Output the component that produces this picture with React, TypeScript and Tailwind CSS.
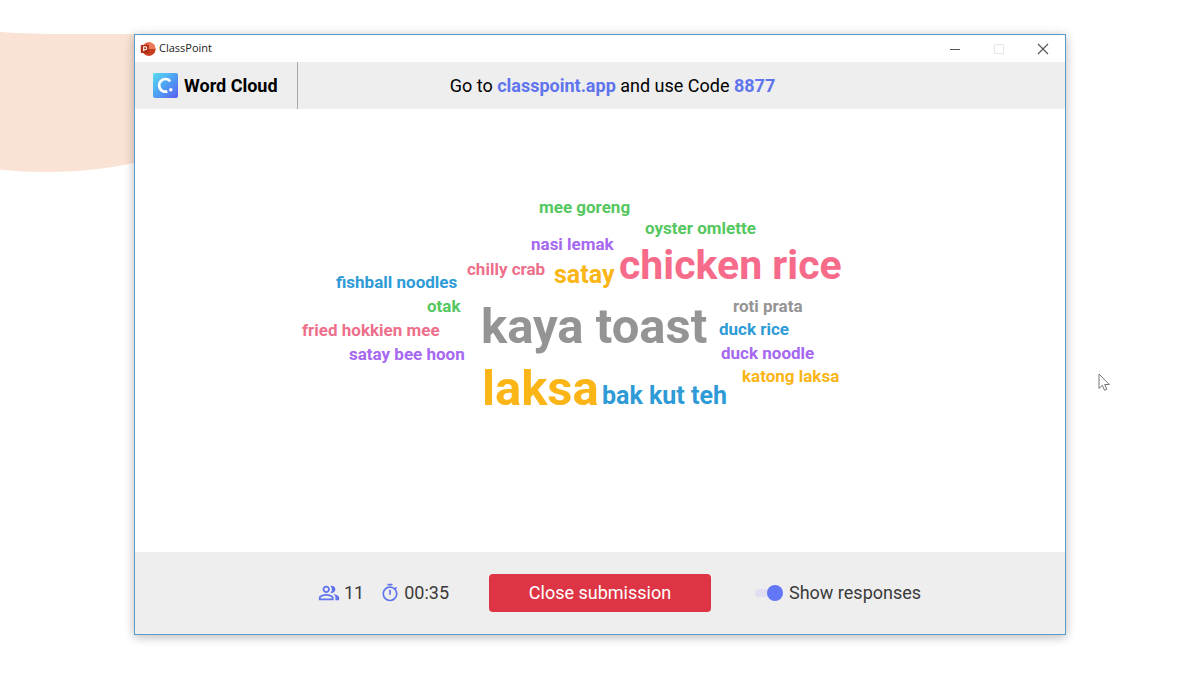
import { useState } from 'react';
import { MdOutlinePeopleAlt, MdOutlineTimer } from 'react-icons/md';

const words = [
  { text: 'mee goreng', className: 'left-[239px] top-[8px] text-[17px] text-[#55c760]' },
  { text: 'oyster omlette', className: 'left-[345px] top-[29px] text-[17px] text-[#55c760]' },
  { text: 'nasi lemak', className: 'left-[231px] top-[45px] text-[17px] text-[#a668f0]' },
  { text: 'chicken rice', className: 'left-[319px] top-[54px] text-[41px] text-[#f76b8a]' },
  { text: 'chilly crab', className: 'left-[167px] top-[70px] text-[17px] text-[#ee6f8b]' },
  { text: 'satay', className: 'left-[254px] top-[71px] text-[25px] text-[#fbb516]' },
  { text: 'fishball noodles', className: 'left-[36px] top-[83px] text-[17px] text-[#2f9bd6]' },
  { text: 'otak', className: 'left-[127px] top-[107px] text-[17px] text-[#55c760]' },
  { text: 'roti prata', className: 'left-[433px] top-[107px] text-[17px] text-[#949494]' },
  { text: 'kaya toast', className: 'left-[181px] top-[111px] text-[49px] text-[#949494]' },
  { text: 'fried hokkien mee', className: 'left-[2px] top-[131px] text-[17px] text-[#ee6f8b]' },
  { text: 'duck rice', className: 'left-[419px] top-[130px] text-[17px] text-[#2f9bd6]' },
  { text: 'satay bee hoon', className: 'left-[49px] top-[155px] text-[17px] text-[#a668f0]' },
  { text: 'duck noodle', className: 'left-[421px] top-[154px] text-[17px] text-[#a668f0]' },
  { text: 'katong laksa', className: 'left-[442px] top-[177px] text-[17px] text-[#fbb516]' },
  { text: 'laksa', className: 'left-[182px] top-[173px] text-[49px] text-[#fbb516]' },
  { text: 'bak kut teh', className: 'left-[302px] top-[192px] text-[25px] text-[#2f9bd6]' },
];

const PowerPointIcon = () => (
  <svg viewBox="0 0 16 16" className="h-4 w-4" aria-hidden="true">
    <circle cx="8.8" cy="8" r="6.7" fill="#e2583a" />
    <path d="M8.8 1.3A6.7 6.7 0 0 1 15.5 8H8.8z" fill="#ee7a5d" />
    <path d="M2.1 8h13.4A6.7 6.7 0 0 1 2.1 8z" fill="#c43e1f" />
    <rect x="0.8" y="4" width="8" height="8" rx="0.8" fill="#b02c12" />
    <path d="M3.7 10.3V5.8h1.6a1.4 1.4 0 0 1 0 2.9H3.7" fill="none" stroke="#fff" strokeWidth="1.1" />
  </svg>
);

const ClassPointLogo = () => (
  <svg viewBox="0 0 25 25" className="h-[25px] w-[25px]" aria-hidden="true">
    <defs>
      <linearGradient id="logo" x1="0" y1="0" x2="1" y2="1">
        <stop offset="0" stopColor="#55dcf0" />
        <stop offset="0.5" stopColor="#4fa0f4" />
        <stop offset="1" stopColor="#5a5ff0" />
      </linearGradient>
    </defs>
    <rect width="25" height="25" rx="2" fill="url(#logo)" />
    <path d="M17.2 8.2A6.3 6.3 0 1 0 14.3 18.4" fill="none" stroke="#fff" strokeWidth="2.8" />
    <circle cx="17.8" cy="16.8" r="1.7" fill="#fff" />
  </svg>
);

const TitleBar = () => (
  <div className="flex h-[27px] items-center justify-between bg-white pl-[5px]">
    <div className="flex items-center gap-[3px] font-['Open_Sans',sans-serif] text-[11px] text-[#222]">
      <PowerPointIcon />
      <span>ClassPoint</span>
    </div>
    <div className="flex h-full">
      <button type="button" aria-label="Minimize" className="flex w-11 items-center justify-center text-[#555]">
        <svg viewBox="0 0 12 12" className="h-3 w-3" fill="none" stroke="currentColor">
          <path d="M1 6.5h10" />
        </svg>
      </button>
      <button type="button" aria-label="Maximize" disabled className="flex w-11 items-center justify-center text-[#e6e6e6]">
        <svg viewBox="0 0 12 12" className="h-3 w-3" fill="none" stroke="currentColor">
          <path d="M1.5 1.5h9v9h-9z" />
        </svg>
      </button>
      <button type="button" aria-label="Close" className="flex w-11 items-center justify-center text-[#555]">
        <svg viewBox="0 0 12 12" className="h-3 w-3" fill="none" stroke="currentColor" strokeWidth="1.1">
          <path d="M1 1l10 10M11 1L1 11" />
        </svg>
      </button>
    </div>
  </div>
);

const Header = () => (
  <header className="flex h-[47px] items-center bg-[#eeeeef] text-black">
    <div className="flex h-full w-[163px] items-center gap-[6px] border-r border-[#a9a9a9] pl-[18px]">
      <ClassPointLogo />
      <h1 className="text-lg font-bold">Word Cloud</h1>
    </div>
    <p className="flex-1 pr-[138px] text-center text-lg">
      Go to <a href="#join" className="font-bold text-[#6074ee]">classpoint.app</a> and use Code{' '}
      <strong className="font-bold text-[#6074ee]">8877</strong>
    </p>
  </header>
);

const Footer = () => {
  const [showResponses, setShowResponses] = useState(true);

  return (
    <footer className="grid h-[82px] grid-cols-[1fr_auto_1fr] items-center gap-10 bg-[#eeeeef] text-lg text-[#3a3a3a]">
      <div className="flex items-center justify-end gap-4">
        <span className="flex items-center gap-1">
          <MdOutlinePeopleAlt className="h-[22px] w-[22px] text-[#6074ee]" />
          11
        </span>
        <span className="flex items-center gap-1">
          <MdOutlineTimer className="h-5 w-5 text-[#6074ee]" />
          00:35
        </span>
      </div>
      <button type="button" className="h-[38px] w-[222px] rounded-sm bg-[#dd3545] text-white">
        Close submission
      </button>
      <label className="flex items-center gap-[6px] pl-1">
        <span className="relative flex h-4 w-7 items-center">
          <input
            type="checkbox"
            role="switch"
            checked={showResponses}
            onChange={(e) => setShowResponses(e.target.checked)}
            className="peer h-2 w-full appearance-none rounded-full bg-[#e0def0]"
          />
          <span className="pointer-events-none absolute left-0 h-4 w-4 rounded-full bg-gray-400 peer-checked:right-0 peer-checked:left-auto peer-checked:bg-[#6177f5]" />
        </span>
        Show responses
      </label>
    </footer>
  );
};

const App = () => {
  return (
    <div className="relative flex min-h-screen justify-center overflow-hidden bg-white pt-[34px] pb-10 font-[Roboto,sans-serif]">
      <svg viewBox="0 0 180 150" className="absolute top-[30px] left-0 h-[150px] w-[180px]" aria-hidden="true">
        <path d="M0 2Q30 4 70 4L134 4V133Q92 142 48 142Q22 142 0 139.500Z" fill="#fae3d5" />
      </svg>

      <div className="relative flex w-full max-w-[932px] flex-col border border-[#5c9ccb] bg-white shadow-[0_2px_10px_rgba(0,0,0,0.28)]">
        <TitleBar />
        <Header />
        <main className="flex flex-1 items-center justify-center">
          <ul className="relative h-[280px] w-[600px]">
            {words.map((word) => (
              <li key={word.text} className={`absolute leading-none font-bold whitespace-nowrap ${word.className}`}>
                {word.text}
              </li>
            ))}
          </ul>
        </main>
        <Footer />
      </div>

      <svg viewBox="0 0 12 19" className="absolute top-[373px] left-[1098px] h-[19px] w-3" aria-hidden="true">
        <path
          d="M1 1v14.500l3.400-3.200 2.100 5 2.300-1-2.100-4.800h4.600z"
          fill="#fff"
          stroke="#777"
          strokeLinejoin="round"
        />
      </svg>
    </div>
  );
};

export default App;
